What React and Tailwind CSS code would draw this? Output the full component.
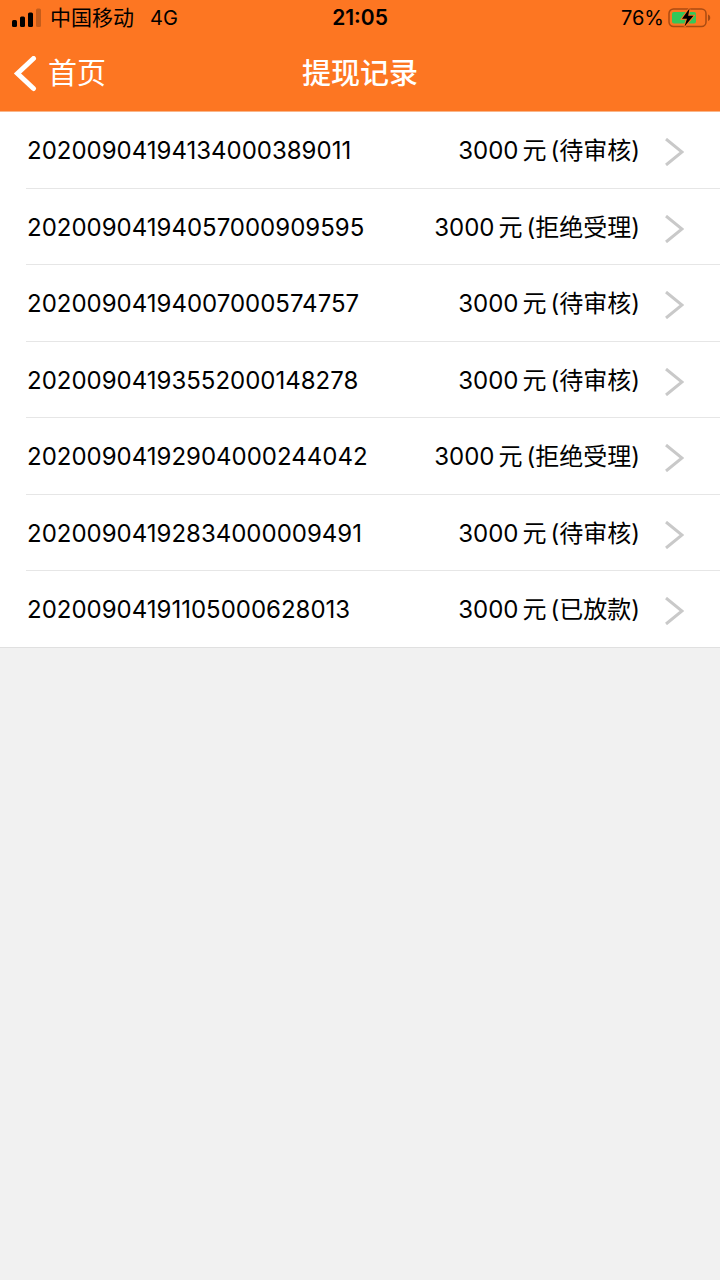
import React from "react";

const records = [
  { id: "20200904194134000389011", amount: 3000, status: "待审核" },
  { id: "20200904194057000909595", amount: 3000, status: "拒绝受理" },
  { id: "20200904194007000574757", amount: 3000, status: "待审核" },
  { id: "20200904193552000148278", amount: 3000, status: "待审核" },
  { id: "20200904192904000244042", amount: 3000, status: "拒绝受理" },
  { id: "20200904192834000009491", amount: 3000, status: "待审核" },
  { id: "20200904191105000628013", amount: 3000, status: "已放款" },
];

const SignalIcon = () => (
  <svg className="w-[30px] h-5" viewBox="0 0 30 20" aria-hidden="true">
    <rect x="0" y="12" width="5" height="7" rx="1.5" />
    <rect x="8" y="8.5" width="5" height="10.5" rx="1.5" />
    <rect x="16" y="4.5" width="5" height="14.5" rx="1.5" />
    <rect x="24" y="0.5" width="5" height="18.5" rx="1.5" opacity="0.22" />
  </svg>
);

const BatteryIcon = () => (
  <svg className="w-11 h-5" viewBox="0 0 44 20" aria-hidden="true">
    <rect x="1" y="0.9" width="37" height="17.6" rx="4.5" fill="none" stroke="#a94b12" strokeWidth="1.5" />
    <path d="M40 6.5c3 1 3 5.5 0 6.5z" fill="#a94b12" />
    <rect x="4" y="4" width="24" height="11.5" rx="2" fill="#34c759" />
    <path d="M21.5 0.5L14 10.7h5L16.5 18.5L25.5 7.8h-5.3z" fill="#000" stroke="#fd7622" strokeWidth="2" paintOrder="stroke" />
  </svg>
);

const StatusBar = () => (
  <div className="grid grid-cols-3 items-center h-9 px-2 text-[21px] text-black">
    <div className="flex items-center gap-2 pl-1">
      <SignalIcon />
      <span>中国移动</span>
      <span className="ml-2 text-xl">4G</span>
    </div>
    <span className="text-center font-semibold">21:05</span>
    <div className="flex items-center justify-end gap-1">
      <span className="text-xl">76%</span>
      <BatteryIcon />
    </div>
  </div>
);

const NavBar = () => (
  <div className="grid grid-cols-3 items-center h-[75px] px-3 text-white">
    <a href="#home" className="flex items-center gap-2 text-[29px]">
      <svg className="w-7 h-9" viewBox="0 0 28 36" fill="none" stroke="currentColor" strokeWidth="5" strokeLinecap="round" aria-hidden="true">
        <path d="M21.5 2.5L5.5 17.5L21.5 32.5" />
      </svg>
      首页
    </a>
    <h1 className="text-center text-[29px] font-medium">提现记录</h1>
  </div>
);

const RecordRow = ({ record }) => (
  <li className="h-[77px] even:h-[76px] last:h-[76px] border-b border-[#e6e6e6] last:border-b-0">
    <a href={`#${record.id}`} className="flex h-full items-center pl-px pr-9 pt-0.5">
      <span className="flex-1">{record.id}</span>
      <span className="flex gap-1">
        <span>{record.amount}</span>
        <span>元</span>
        <span>({record.status})</span>
      </span>
      <svg className="ml-6 mt-0.5 w-5 h-7" viewBox="0 0 20 28" fill="none" stroke="#c9c9c9" strokeWidth="3" aria-hidden="true">
        <path d="M2 1L18 14L2 27" />
      </svg>
    </a>
  </li>
);

export default function App() {
  return (
    <div className="min-h-screen bg-[#f1f1f1] font-['Inter','Noto_Sans_CJK_SC',sans-serif]">
      <header className="bg-[#fd7622] border-b border-[#f9b68a]">
        <StatusBar />
        <NavBar />
      </header>
      <ul className="bg-white border-b border-[#e0e0e0] pl-[26px] text-2xl text-black">
        {records.map((record) => (
          <RecordRow key={record.id} record={record} />
        ))}
      </ul>
    </div>
  );
}
